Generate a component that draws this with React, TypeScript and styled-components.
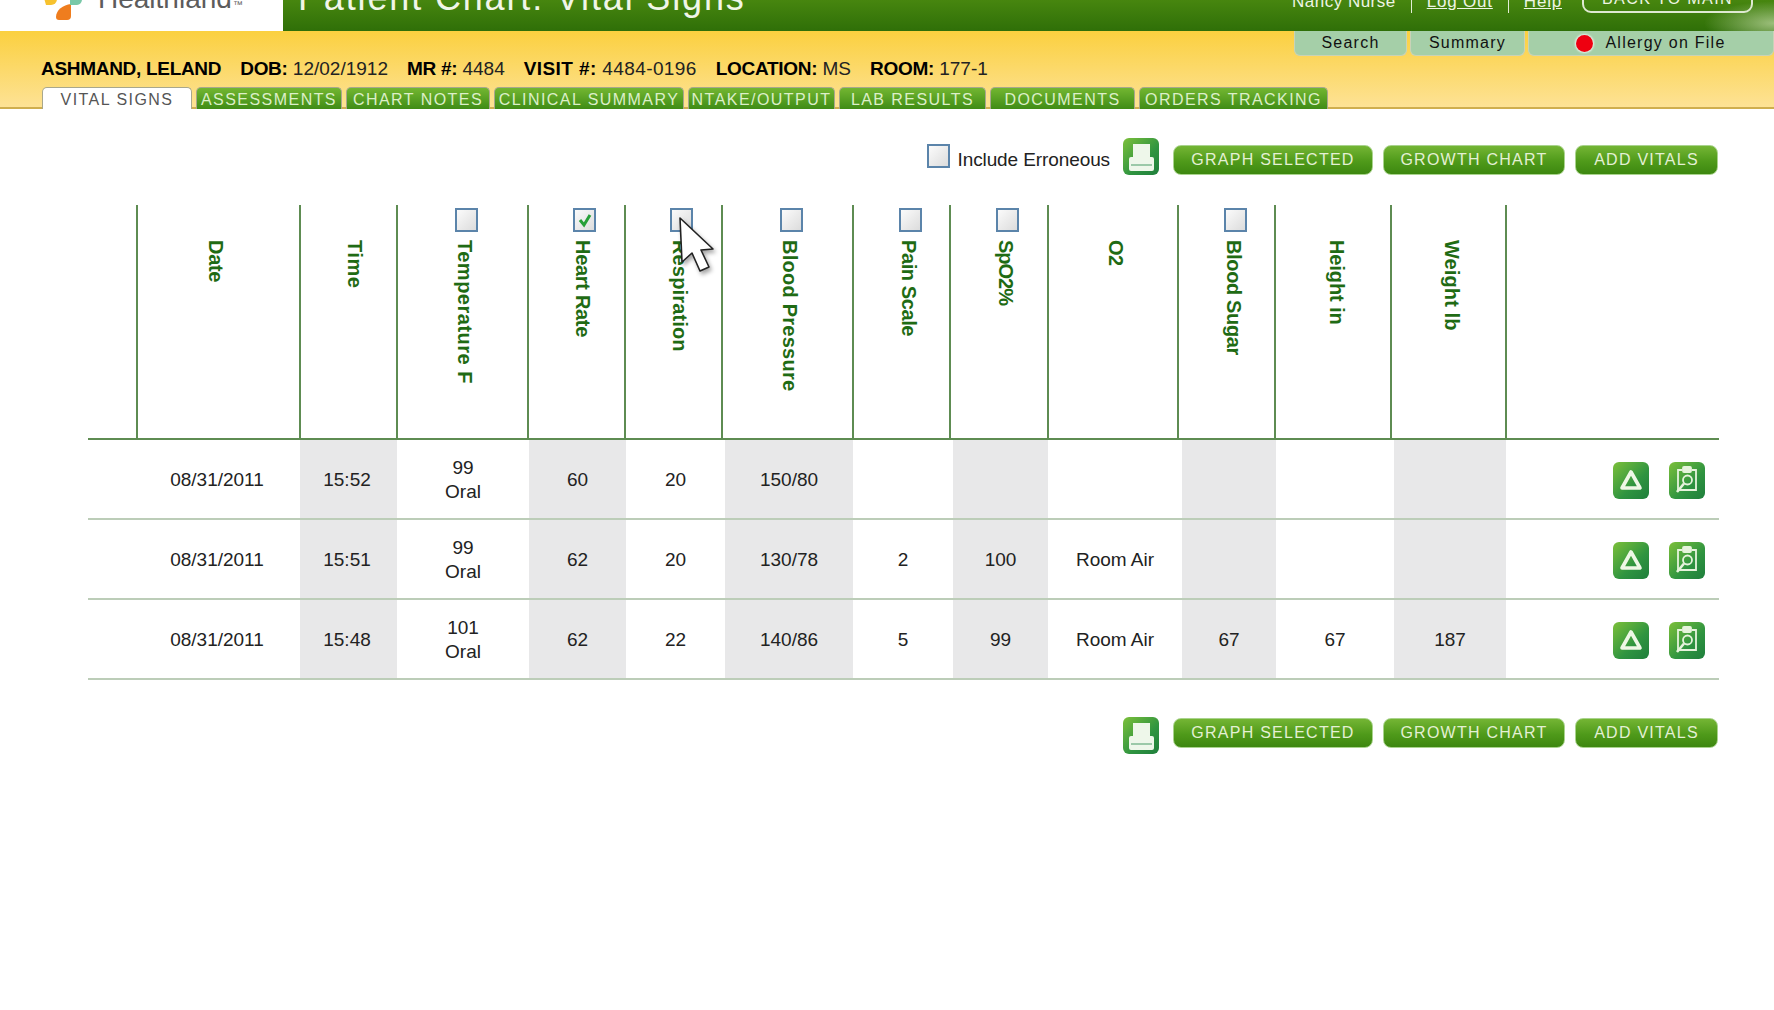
import styled, { createGlobalStyle } from 'styled-components';

const GlobalStyle = createGlobalStyle`
  html, body {
    margin: 0;
    padding: 0;
    background: #fff;
    font-family: "Liberation Sans", Arial, sans-serif;
    overflow: hidden;
  }
`;

const Page = styled.div`
  position: relative;
  width: 1774px;
  height: 1010px;
  overflow: hidden;
  background: #fff;
`;

const TopBar = styled.header`
  display: flex;
  align-items: flex-end;
  height: 31px;
  overflow: hidden;
  background:
    radial-gradient(ellipse 70px 22px at 100% 75%, rgba(190, 215, 160, 0.75), rgba(190, 215, 160, 0) 100%),
    linear-gradient(#47860f, #2f6f08);
`;

const LogoArea = styled.div`
  display: flex;
  align-items: flex-end;
  width: 283px;
  height: 100%;
  background: #fff;
  flex: none;
`;

const LogoMark = styled.svg`
  width: 46px;
  height: 40px;
  margin: 0 0 10px 41px;
  flex: none;
  overflow: visible;
`;

const LogoText = styled.div`
  margin: 0 0 16px 11px;
  font-size: 28px;
  line-height: 32px;
  color: #5c5c5c;
  white-space: nowrap;

  small {
    font-size: 10px;
    line-height: 0;
    margin-left: 1px;
  }
`;

const Title = styled.h1`
  margin: 0 0 13px 15px;
  font-size: 36px;
  line-height: 40px;
  font-weight: 400;
  letter-spacing: 1.85px;
  color: #f1f6e8;
  white-space: nowrap;
`;

const UserNav = styled.nav`
  display: flex;
  align-items: flex-end;
  margin-left: auto;
  padding-right: 21px;
  color: #eef5e4;
  font-size: 17px;
`;

const NavText = styled.span`
  margin-bottom: 20px;
  line-height: 18px;
  letter-spacing: 0.5px;
  white-space: nowrap;
`;

const NavLink = styled(NavText)`
  text-decoration: underline;
  letter-spacing: 0.8px;
`;

const NavDivider = styled.span`
  width: 1px;
  height: 18px;
  margin: 0 15px 18px;
  background: #e3eed5;
`;

const BackButton = styled.div`
  margin: 0 0 18px 20px;
  width: 171px;
  height: 30px;
  box-sizing: border-box;
  border: 2px solid #dfe9d2;
  border-radius: 9px;
  color: #eef5e4;
  font-size: 16px;
  line-height: 27px;
  letter-spacing: 1.4px;
  text-align: center;
  white-space: nowrap;
`;

const Band = styled.div`
  display: flex;
  height: 78px;
  box-sizing: border-box;
  border-bottom: 2px solid #cfae4e;
  background: linear-gradient(#fbd03f, #fde295);
`;

const BandLeft = styled.div`
  display: flex;
  flex-direction: column;
  flex: 1;
  min-width: 0;
  padding: 27px 0 0 41px;
`;

const PatientLine = styled.div`
  display: flex;
  gap: 19px;
  height: 22px;
  font-size: 19px;
  line-height: 22px;
  color: #222;
  white-space: nowrap;
`;

const PatientItem = styled.span<{ $track?: number }>`
  letter-spacing: ${(p) => p.$track ?? 0}px;

  b {
    color: #000;
    font-weight: 700;
    letter-spacing: ${(p) => p.$track ?? -0.3}px;
  }
`;

const TabRow = styled.div`
  display: flex;
  gap: 4px;
  margin: 7px 0 0 1px;
`;

const Tab = styled.div<{ $w: number; $active?: boolean }>`
  flex: none;
  width: ${(p) => p.$w}px;
  height: 22px;
  box-sizing: border-box;
  border: 1px solid #a8a78d;
  border-bottom: none;
  border-radius: 5px 5px 0 0;
  background: ${(p) => (p.$active ? '#fff' : 'linear-gradient(#73b631, #3f8c16)')};
  color: ${(p) => (p.$active ? '#555' : '#dcefc8')};
  font-size: 16px;
  line-height: 24px;
  letter-spacing: 1.45px;
  text-align: center;
  white-space: nowrap;
  overflow: hidden;
`;

const QuickTabs = styled.div`
  display: flex;
  flex: none;
  gap: 3px;
`;

const QuickTab = styled.div<{ $w: number }>`
  display: flex;
  align-items: center;
  justify-content: center;
  gap: 12px;
  width: ${(p) => p.$w}px;
  height: 25px;
  box-sizing: border-box;
  border: 1px solid #c9d3b7;
  border-top: none;
  border-radius: 0 0 6px 6px;
  background: #a5cfa8;
  color: #111;
  font-size: 16px;
  letter-spacing: 1.25px;
  white-space: nowrap;
`;

const AlertDot = styled.span`
  width: 17px;
  height: 17px;
  border-radius: 50%;
  background: #ee0010;
  box-shadow: 0 0 2px 1px rgba(255, 255, 255, 0.8);
`;

const Content = styled.main`
  padding: 29px 55px 0 88px;
`;

const Toolbar = styled.div<{ $bottom?: boolean }>`
  display: flex;
  align-items: ${(p) => (p.$bottom ? 'flex-start' : 'flex-end')};
  justify-content: flex-end;
  height: 37px;
  margin-top: ${(p) => (p.$bottom ? '37px' : '0')};
  padding-right: 1px;
`;

const Erroneous = styled.label`
  display: flex;
  align-items: center;
  gap: 7px;
  align-self: center;
  margin: 6px 13px 0 0;
  color: #222;
  font-size: 19px;
  letter-spacing: -0.1px;
  white-space: nowrap;
`;

const CheckBox = styled.span`
  display: flex;
  align-items: center;
  justify-content: center;
  width: 23px;
  height: 24px;
  box-sizing: border-box;
  border: 2px solid #5b84aa;
  background: linear-gradient(135deg, #fbfbfb, #dcdcdc);
  flex: none;
`;

const ErroneousCheck = styled(CheckBox)`
  margin-top: -8px;
`;

const IconTile = styled.span`
  display: flex;
  align-items: center;
  justify-content: center;
  width: 36px;
  height: 37px;
  border-radius: 6px;
  background: linear-gradient(135deg, #7cc03a, #2f9440 60%, #1f7f3c);
  flex: none;
`;

const ActionButton = styled.div<{ $w: number; $first?: boolean; $raised?: boolean }>`
  width: ${(p) => p.$w}px;
  height: 30px;
  margin-left: ${(p) => (p.$first ? '14px' : '10px')};
  margin-top: ${(p) => (p.$raised ? '1px' : '0')};
  box-sizing: border-box;
  border: 1px solid #a9d38d;
  border-radius: 8px;
  background: linear-gradient(#74b534, #4f9a1a 55%, #3d8710);
  color: #e4f0d4;
  font-size: 16px;
  line-height: 28px;
  letter-spacing: 1.25px;
  text-align: center;
  white-space: nowrap;
`;

const HeaderRow = styled.div`
  display: grid;
  grid-template-columns: 48px 163px 97px 131px 97px 97px 131px 97px 98px 130px 97px 116px 115px 214px;
  height: 235px;
  margin-top: 30px;
  box-sizing: border-box;
  border-bottom: 2px solid #5e8c52;
`;

const HeaderCell = styled.div<{ $shift?: number }>`
  display: flex;
  flex-direction: column;
  align-items: center;
  position: relative;
  box-sizing: border-box;
  padding: 35px 0 0 ${(p) => 2 * (p.$shift ?? 0)}px;
  border-left: 2px solid #5e8c52;
`;

const DateHeaderCell = styled(HeaderCell)`
  padding: 35px 6px 0 0;
`;

const Spacer = styled.div``;

const HeaderCheck = styled(CheckBox)`
  position: absolute;
  top: 3px;
  margin-left: 4px;
`;

const VerticalLabel = styled.span<{ $track?: number }>`
  writing-mode: vertical-rl;
  color: #1f6b14;
  font-size: 20px;
  font-weight: 700;
  letter-spacing: ${(p) => p.$track ?? 0}px;
  white-space: nowrap;
`;

const DataRow = styled.div`
  display: grid;
  grid-template-columns: 212px 97px 132px 97px 99px 128px 100px 95px 134px 94px 118px 112px 213px;
  height: 80px;
  box-sizing: border-box;
  border-bottom: 2px solid #bccdb8;
`;

const DataCell = styled.div<{ $shaded?: boolean }>`
  display: flex;
  flex-direction: column;
  align-items: center;
  justify-content: center;
  padding-top: 2px;
  background: ${(p) => (p.$shaded ? '#e8e8e9' : 'transparent')};
  color: #222;
  font-size: 19px;
  line-height: 24px;
  white-space: nowrap;
`;

const DateCell = styled(DataCell)`
  padding-left: 46px;
`;

const TimeCell = styled(DataCell)`
  padding-right: 3px;
`;

const RowActions = styled.div`
  display: flex;
  align-items: center;
  justify-content: flex-end;
  gap: 20px;
  padding: 2px 14px 0 0;
`;

const Pointer = styled.svg`
  position: absolute;
  left: 678px;
  top: 216px;
  width: 38px;
  height: 60px;
  filter: drop-shadow(2px 3px 2px rgba(0, 0, 0, 0.35));
`;

const tabs = [
  { label: 'VITAL SIGNS', w: 150, active: true },
  { label: 'ASSESSMENTS', w: 146 },
  { label: 'CHART NOTES', w: 144 },
  { label: 'CLINICAL SUMMARY', w: 190 },
  { label: 'NTAKE/OUTPUT', w: 147 },
  { label: 'LAB RESULTS', w: 147 },
  { label: 'DOCUMENTS', w: 145 },
  { label: 'ORDERS TRACKING', w: 189 },
];

const columns = [
  { label: 'Time', shift: 6, track: 0.5 },
  { label: 'Temperature F', shift: 2, track: 0.5, check: true },
  { label: 'Heart Rate', shift: 6, track: -0.3, check: true, checked: true },
  { label: 'Respiration', shift: 6, track: 0.15, check: true },
  { label: 'Blood Pressure', shift: 2, track: 0.25, check: true },
  { label: 'Pain Scale', shift: 7, track: -0.4, check: true },
  { label: 'SpO2%', shift: 6, track: -1, check: true },
  { label: 'O2', shift: 2, track: -0.5 },
  { label: 'Blood Sugar', shift: 7, track: -0.35, check: true },
  { label: 'Height in', shift: 3, track: -0.1 },
  { label: 'Weight lb', shift: 3, track: 0.1 },
];

const rows = [
  { time: '15:52', temp: '99', hr: '60', resp: '20', bp: '150/80', pain: '', spo2: '', o2: '', sugar: '', height: '', weight: '' },
  { time: '15:51', temp: '99', hr: '62', resp: '20', bp: '130/78', pain: '2', spo2: '100', o2: 'Room Air', sugar: '', height: '', weight: '' },
  { time: '15:48', temp: '101', hr: '62', resp: '22', bp: '140/86', pain: '5', spo2: '99', o2: 'Room Air', sugar: '67', height: '67', weight: '187' },
];

const PrinterIcon = () => (
  <svg width="28" height="28" viewBox="0 0 28 28" fill="#eef7ea">
    <path d="M6 1h17v14H6z" />
    <path d="M2 16a2 2 0 0 1 2-2h21a2 2 0 0 1 2 2v10a2 2 0 0 1-2 2H4a2 2 0 0 1-2-2z" />
    <rect x="4" y="21" width="21" height="2" fill="#9bc9a8" />
  </svg>
);

const TriangleIcon = () => (
  <svg width="24" height="24" viewBox="0 0 24 24" fill="none" stroke="#eef7e6" strokeWidth="3.6" strokeLinejoin="round">
    <path d="M12 4 21 20H3z" />
  </svg>
);

const ChartIcon = () => (
  <svg width="28" height="30" viewBox="0 0 28 30" fill="none" stroke="#e6f3dc" strokeWidth="1.8">
    <path d="M9 5H5v20h18V5h-4" />
    <rect x="10" y="2" width="8" height="5" rx="1" fill="#e6f3dc" />
    <circle cx="14.5" cy="15" r="4.5" />
    <path d="M11 18.5 4 27" strokeWidth="2.6" />
  </svg>
);

const ActionButtons = ({ raised }: { raised?: boolean }) => (
  <>
    <ActionButton $first $raised={raised} $w={200}>GRAPH SELECTED</ActionButton>
    <ActionButton $raised={raised} $w={182}>GROWTH CHART</ActionButton>
    <ActionButton $raised={raised} $w={143}>ADD VITALS</ActionButton>
  </>
);

const App = () => (
  <Page>
    <GlobalStyle />
    <TopBar>
      <LogoArea>
        <LogoMark viewBox="0 0 46 40">
          <path d="M1 10h15v8a6 6 0 0 1-6 6H5z" fill="#f7c22e" />
          <path d="M30 23v12a4 4 0 0 1-4 4h-8a3 3 0 0 1-3-3c0-7 7-12 15-13z" fill="#ef7d1e" />
          <path d="M29 10h15l-3 9a6 6 0 0 1-5 5h-7z" fill="#79c8a8" />
        </LogoMark>
        <LogoText>Healthland<small>™</small></LogoText>
      </LogoArea>
      <Title>Patient Chart: Vital Signs</Title>
      <UserNav>
        <NavText>Nancy Nurse</NavText>
        <NavDivider />
        <NavLink>Log Out</NavLink>
        <NavDivider />
        <NavLink>Help</NavLink>
        <BackButton>BACK TO MAIN</BackButton>
      </UserNav>
    </TopBar>
    <Band>
      <BandLeft>
        <PatientLine>
          <PatientItem><b>ASHMAND, LELAND</b></PatientItem>
          <PatientItem><b>DOB:</b> 12/02/1912</PatientItem>
          <PatientItem><b>MR #:</b> 4484</PatientItem>
          <PatientItem $track={0.4}><b>VISIT #:</b> 4484-0196</PatientItem>
          <PatientItem><b>LOCATION:</b> MS</PatientItem>
          <PatientItem><b>ROOM:</b> 177-1</PatientItem>
        </PatientLine>
        <TabRow>
          {tabs.map((t) => (
            <Tab key={t.label} $w={t.w} $active={t.active}>{t.label}</Tab>
          ))}
        </TabRow>
      </BandLeft>
      <QuickTabs>
        <QuickTab $w={113}>Search</QuickTab>
        <QuickTab $w={115}>Summary</QuickTab>
        <QuickTab $w={246}><AlertDot />Allergy on File</QuickTab>
      </QuickTabs>
    </Band>
    <Content>
      <Toolbar>
        <Erroneous><ErroneousCheck />Include Erroneous</Erroneous>
        <IconTile><PrinterIcon /></IconTile>
        <ActionButtons />
      </Toolbar>
      <HeaderRow>
        <Spacer />
        <DateHeaderCell>
          <VerticalLabel $track={-0.3}>Date</VerticalLabel>
        </DateHeaderCell>
        {columns.map((c) => (
          <HeaderCell key={c.label} $shift={c.shift}>
            {c.check && (
              <HeaderCheck>
                {c.checked && (
                  <svg width="16" height="16" viewBox="0 0 16 16" fill="none" stroke="#27a038" strokeWidth="3">
                    <path d="M3 8l4 5 6-10" />
                  </svg>
                )}
              </HeaderCheck>
            )}
            <VerticalLabel $track={c.track}>{c.label}</VerticalLabel>
          </HeaderCell>
        ))}
        <HeaderCell />
      </HeaderRow>
      {rows.map((r) => (
        <DataRow key={r.time}>
          <DateCell>08/31/2011</DateCell>
          <TimeCell $shaded>{r.time}</TimeCell>
          <DataCell><span>{r.temp}</span><span>Oral</span></DataCell>
          <DataCell $shaded>{r.hr}</DataCell>
          <DataCell>{r.resp}</DataCell>
          <DataCell $shaded>{r.bp}</DataCell>
          <DataCell>{r.pain}</DataCell>
          <DataCell $shaded>{r.spo2}</DataCell>
          <DataCell>{r.o2}</DataCell>
          <DataCell $shaded>{r.sugar}</DataCell>
          <DataCell>{r.height}</DataCell>
          <DataCell $shaded>{r.weight}</DataCell>
          <RowActions>
            <IconTile><TriangleIcon /></IconTile>
            <IconTile><ChartIcon /></IconTile>
          </RowActions>
        </DataRow>
      ))}
      <Toolbar $bottom>
        <IconTile><PrinterIcon /></IconTile>
        <ActionButtons raised />
      </Toolbar>
    </Content>
    <Pointer viewBox="0 0 38 60">
      <path d="M2 2 L4 46 L14 37 L22 55 L31 51 L23 34 L35 33 Z" fill="#fff" stroke="#222" strokeWidth="1.6" strokeLinejoin="round" />
    </Pointer>
  </Page>
);

export default App;
